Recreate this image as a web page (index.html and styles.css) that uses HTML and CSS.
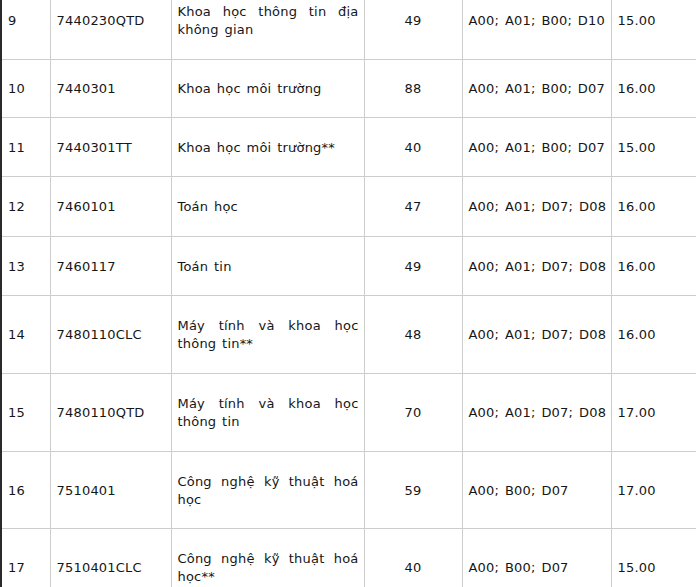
FILE: index.html
```html
<!DOCTYPE html>
<html lang="vi">
<head>
<meta charset="utf-8">
<link rel="stylesheet" href="styles.css">
</head>
<body>
<table class="grid">
  <colgroup>
    <col class="c-stt"><col class="c-code"><col class="c-name"><col class="c-quota"><col class="c-combo"><col class="c-score">
  </colgroup>
  <tbody>
    <tr class="r2 first">
      <td>9</td><td>7440230QTD</td>
      <td class="name"><span class="jl">Khoa học thông tin địa</span><span class="ln">không gian</span></td>
      <td class="num">49</td><td>A00; A01; B00; D10</td><td class="last">15.00</td>
    </tr>
    <tr class="r1 h58">
      <td>10</td><td>7440301</td>
      <td class="name">Khoa học môi trường</td>
      <td class="num">88</td><td>A00; A01; B00; D07</td><td class="last">16.00</td>
    </tr>
    <tr class="r1">
      <td>11</td><td>7440301TT</td>
      <td class="name">Khoa học môi trường**</td>
      <td class="num">40</td><td>A00; A01; B00; D07</td><td class="last">15.00</td>
    </tr>
    <tr class="r1 h60">
      <td>12</td><td>7460101</td>
      <td class="name">Toán học</td>
      <td class="num">47</td><td>A00; A01; D07; D08</td><td class="last">16.00</td>
    </tr>
    <tr class="r1">
      <td>13</td><td>7460117</td>
      <td class="name">Toán tin</td>
      <td class="num">49</td><td>A00; A01; D07; D08</td><td class="last">16.00</td>
    </tr>
    <tr class="r2">
      <td>14</td><td>7480110CLC</td>
      <td class="name"><span class="jl">Máy tính và khoa học</span><span class="ln">thông tin**</span></td>
      <td class="num">48</td><td>A00; A01; D07; D08</td><td class="last">16.00</td>
    </tr>
    <tr class="r2">
      <td>15</td><td>7480110QTD</td>
      <td class="name"><span class="jl">Máy tính và khoa học</span><span class="ln">thông tin</span></td>
      <td class="num">70</td><td>A00; A01; D07; D08</td><td class="last">17.00</td>
    </tr>
    <tr class="r2 h77">
      <td>16</td><td>7510401</td>
      <td class="name"><span class="jl">Công nghệ kỹ thuật hoá</span><span class="ln">học</span></td>
      <td class="num">59</td><td>A00; B00; D07</td><td class="last">17.00</td>
    </tr>
    <tr class="r2">
      <td>17</td><td>7510401CLC</td>
      <td class="name"><span class="jl">Công nghệ kỹ thuật hoá</span><span class="ln">học**</span></td>
      <td class="num">40</td><td>A00; B00; D07</td><td class="last">15.00</td>
    </tr>
  </tbody>
</table>
</body>
</html>
```

FILE: styles.css
```css
html, body {
  margin: 0;
  padding: 0;
  background: #ffffff;
  overflow: hidden;
}

.grid {
  margin-top: -19px;
  width: 694px;
  table-layout: fixed;
  border-collapse: collapse;
  border: none;
  font-family: "DejaVu Sans", Verdana, sans-serif;
  font-size: 13px;
  line-height: 18px;
  letter-spacing: 0.2px;
  word-spacing: 1.5px;
  color: #161616;
}

.c-stt { width: 49px; }
.c-code { width: 121px; }
.c-name { width: 193px; }
.c-quota { width: 98px; }
.c-combo { width: 149px; }
.c-score { width: 84px; }

.grid td {
  border: 1px solid #cdcdcd;
  padding: 1px 6px 0;
  vertical-align: middle;
  text-align: left;
  white-space: nowrap;
}

.grid td:first-child {
  border-left: 2px solid #2a2a2a;
}

.grid td.last {
  border-right: 1px solid #ffffff;
}

.grid td.num {
  text-align: center;
}

.grid td.name {
  white-space: normal;
  padding-right: 5px;
}

.jl {
  display: block;
  text-align: justify;
  text-align-last: justify;
}

.ln {
  display: block;
}

.r1 { height: 59px; }
.r1.h58 { height: 58px; }
.r1.h60 { height: 60px; }
.r2 { height: 78px; }
.r2.h77 { height: 77px; }
```
